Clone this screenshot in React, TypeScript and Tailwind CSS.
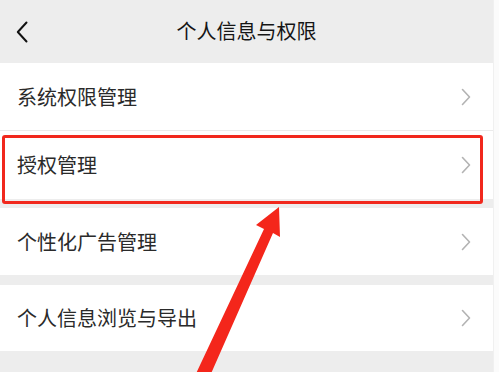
import React from "react";

const Chevron = () => (
  <svg width="10" height="18" viewBox="0 0 10 18" fill="none" className="mr-[22px]">
    <path d="M1.5 1.5 L8.5 9 L1.5 16.5" stroke="#b3b3b3" strokeWidth="1.6" strokeLinecap="round" strokeLinejoin="round" />
  </svg>
);

const Row = ({ label, h, border }: { label: string; h: string; border?: boolean }) => (
  <div className={`flex items-center justify-between bg-white ${h} ${border ? "border-b border-[#ebebeb]" : ""}`}>
    <span className="pl-[17px] text-[20px] leading-none text-[#2a2a2a]">{label}</span>
    <Chevron />
  </div>
);

export default function App() {
  return (
    <div
      className="relative flex h-[372px] w-[499px] overflow-hidden bg-[#fafafa]"
      style={{ fontFamily: '"Noto Sans CJK SC", "Noto Sans", sans-serif' }}
    >
      <div className="flex w-[493px] flex-col bg-[#ededed]">
        <div className="grid h-[63px] grid-cols-[1fr_auto_1fr] items-center">
          <div className="pl-[16px]">
            <svg width="12" height="22" viewBox="0 0 12 22" fill="none">
              <path d="M10.5 1.5 L1.8 11 L10.5 20.5" stroke="#111" strokeWidth="2" strokeLinecap="round" strokeLinejoin="round" />
            </svg>
          </div>
          <div className="pb-[1px] text-[20px] leading-none text-[#151515]">个人信息与权限</div>
          <div />
        </div>
        <Row label="系统权限管理" h="h-[68px]" border />
        <Row label="授权管理" h="h-[68px]" />
        <div className="h-[9px]" />
        <Row label="个性化广告管理" h="h-[67px]" />
        <div className="h-[10px]" />
        <Row label="个人信息浏览与导出" h="h-[66px]" />
      </div>
      <div className="w-[6px] border-l border-[#f0f0f0] bg-[#fbfbfb]" />

      <div className="pointer-events-none absolute left-[2px] top-[135px] h-[69px] w-[481px] rounded-[3px] border-[3px] border-[#f1281d]" />

      <svg className="pointer-events-none absolute left-0 top-0" width="499" height="372" viewBox="0 0 499 372">
        <polygon
          points="279,207 256,225 264,229 193,380 206,385 273,233 280,237"
          fill="#f4261b"
        />
      </svg>
    </div>
  );
}
